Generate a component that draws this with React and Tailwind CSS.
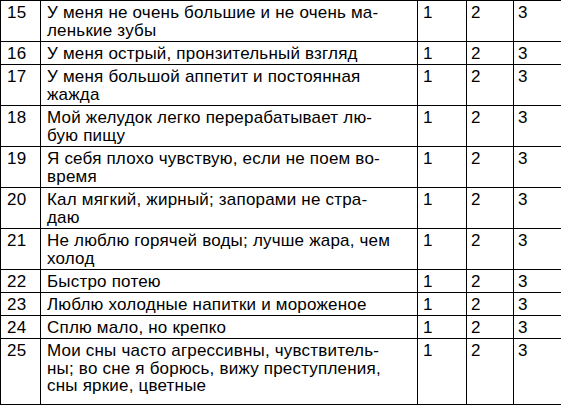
import React from "react";

const rows = [
  { n: 15, text: ["У меня не очень большие и не очень ма-", "ленькие зубы"], h: "h-[41px]" },
  { n: 16, text: ["У меня острый, пронзительный взгляд"], h: "h-[23px]" },
  { n: 17, text: ["У меня большой аппетит и постоянная", "жажда"], h: "h-[41px]" },
  { n: 18, text: ["Мой желудок легко перерабатывает лю-", "бую пищу"], h: "h-[41px]" },
  { n: 19, text: ["Я себя плохо чувствую, если не поем во-", "время"], h: "h-[41px]" },
  { n: 20, text: ["Кал мягкий, жирный; запорами не стра-", "даю"], h: "h-[41px]" },
  { n: 21, text: ["Не люблю горячей воды; лучше жара, чем", "холод"], h: "h-[41px]" },
  { n: 22, text: ["Быстро потею"], h: "h-[23px]" },
  { n: 23, text: ["Люблю холодные напитки и мороженое"], h: "h-[23px]" },
  { n: 24, text: ["Сплю мало, но крепко"], h: "h-[23px]" },
  {
    n: 25,
    text: [
      "Мои сны часто агрессивны, чувствитель-",
      "ны; во сне я борюсь, вижу преступления,",
      "сны яркие, цветные",
    ],
    h: "h-[66px]",
  },
];

const cell = "border border-black align-top pt-[3px] pb-0";

export default function App() {
  return (
    <div className="bg-white w-[561px] h-[405px] overflow-hidden">
      <table
        className="table-fixed border-collapse w-[561px] text-[17px] leading-[17.5px] tracking-[0.2px] text-black"
        style={{ fontFamily: '"Liberation Sans", Arial, sans-serif' }}
      >
        <colgroup>
          <col className="w-[40px]" />
          <col className="w-[377px]" />
          <col className="w-[49px]" />
          <col className="w-[47px]" />
          <col className="w-[48px]" />
        </colgroup>
        <tbody>
          {rows.map((r) => (
            <tr key={r.n} className={r.h}>
              <td className={`${cell} pl-[6px]`}>{r.n}</td>
              <td className={`${cell} pl-[6px] whitespace-nowrap`}>
                {r.text.map((line, i) => (
                  <div key={i}>{line}</div>
                ))}
              </td>
              <td className={`${cell} pl-[5px]`}>1</td>
              <td className={`${cell} pl-[4px]`}>2</td>
              <td className={`${cell} pl-[4px]`}>3</td>
            </tr>
          ))}
        </tbody>
      </table>
    </div>
  );
}
